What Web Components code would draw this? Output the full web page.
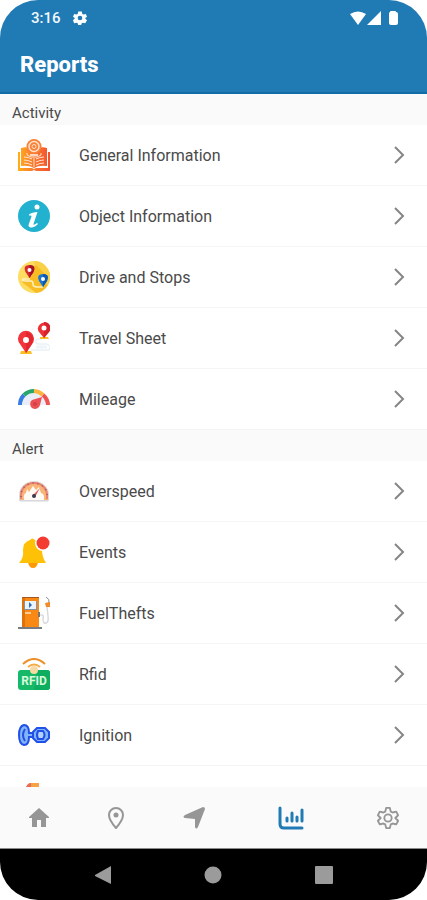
<!DOCTYPE html>
<html lang="en">
<head>
<meta charset="utf-8">
<meta name="viewport" content="width=device-width, initial-scale=1">
<title>Reports</title>
<style>
  body {
    margin: 0;
    background: #fff;
    font-family: Roboto, "Liberation Sans", sans-serif;
    color: #4a4a4a;
  }
</style>
</head>
<body>
<report-app>
  <status-bar slot="top" time="3:16"></status-bar>
  <app-header slot="top">Reports</app-header>

  <report-section heading="Activity">
    <report-row icon="general">General Information</report-row>
    <report-row icon="info">Object Information</report-row>
    <report-row icon="drive">Drive and Stops</report-row>
    <report-row icon="travel">Travel Sheet</report-row>
    <report-row icon="mileage">Mileage</report-row>
  </report-section>
  <report-section heading="Alert">
    <report-row icon="overspeed">Overspeed</report-row>
    <report-row icon="events">Events</report-row>
    <report-row icon="fuel">FuelThefts</report-row>
    <report-row icon="rfid">Rfid</report-row>
    <report-row icon="ignition">Ignition</report-row>
    <report-row icon="sensor"></report-row>
  </report-section>

  <tab-bar slot="bottom"></tab-bar>
  <system-bar slot="bottom"></system-bar>
</report-app>

<script>
const reportIcons = {
  general: `
    <defs><linearGradient id="book" gradientUnits="userSpaceOnUse" x1="0" y1="0" x2="32" y2="0">
      <stop offset="0" stop-color="#ffae1a"/><stop offset=".5" stop-color="#f97830"/><stop offset="1" stop-color="#f4512c"/>
    </linearGradient></defs>
    <path fill="url(#book)" d="M0 13h2v16h12l2 1 2-1h12V13h2v19H18l-2-1-2 1H0z"/>
    <path fill="url(#book)" d="M3 9q7-2 13 2 6-4 13-2v18q-8-1-13 2-5-3-13-2z"/>
    <g fill="none" stroke="#ffe3cc" stroke-width="1">
      <path d="M16 19v9M6 18q4 0 8 2M18 20q4-2 8-2M6 21q4 0 8 2M18 23q4-2 8-2M6 24q4 0 8 2M18 26q4-2 8-2"/>
      <path d="M9 14v2l4 2h6l4-2v-2"/>
    </g>
    <circle cx="16" cy="7.500" r="7.500" fill="#f98036"/>
    <circle cx="16" cy="7.500" r="5" fill="none" stroke="#ffe3cc" stroke-width="1.500"/>
    <circle cx="16" cy="7.500" r="2" fill="none" stroke="#ffe3cc"/>
    <path d="M12 15h8v2h-8z" fill="#fff" opacity=".7"/>`,
  info: `
    <circle cx="16" cy="16" r="16" fill="#22b1ce"/>
    <circle cx="19" cy="7" r="2.500" fill="#fff"/>
    <path d="M11 14.500q3-2.500 8.500-2.500l-4 12q-.5 2 3.500-1l1 1q-4 4-7.500 3.500-3-.5-1.500-4l2.500-7q.5-1.500-2.500-1z" fill="#fff"/>`,
  drive: `
    <circle cx="16" cy="16" r="16" fill="#fddc60"/>
    <path d="M16 0a16 16 0 0 1 14 24L17 8z" fill="#fbd049"/>
    <path d="M12 15l7 1 11 8a16 16 0 0 1-12 8L4 21z" fill="#f8bd25"/>
    <path d="M14 6l4-2 12 12-8 8-8-8z" fill="#f8bd25"/>
    <path d="M12 18H5q-2 2 3 2h5q2 0 2 3t4 3h6" fill="none" stroke="#fff2c4" stroke-width="1.500"/>
    <path d="M11.500 17l-4-6q-3-7 4-7t4 7z" fill="#d52b31"/>
    <path d="M11.500 17V4q7 0 4 7z" fill="#a31522"/>
    <circle cx="11.500" cy="9" r="2" fill="#fff"/>
    <path d="M25 26l-4-6q-3-7 4-7t4 7z" fill="#1976d2"/>
    <path d="M25 26V13q7 0 4 7z" fill="#0d58b2"/>
    <circle cx="25" cy="18" r="2" fill="#fff"/>`,
  travel: `
    <path d="M24 17h-5q-3 2 0 5h10q5 2 2 6H13" fill="none" stroke="#dfeaf2" stroke-width="1"/>
    <path d="M18 25h11" fill="none" stroke="#eef5fa" stroke-width="3"/>
    <path d="M22 15h8l1 2h-9zM3 29h10l1 3H2z" fill="#fbbf26"/>
    <path d="M26 16l-5-6a6 6 0 1 1 10 0z" fill="#ed3237"/>
    <path d="M26 16V0a6 6 0 0 1 5 10z" fill="#d5222d"/>
    <circle cx="26" cy="6" r="2.500" fill="#fff"/>
    <path d="M8 31L2 22a8 8 0 1 1 12 0z" fill="#f1353b"/>
    <path d="M8 31V10a8 8 0 0 1 6 12z" fill="#e3262f"/>
    <circle cx="8" cy="18" r="3" fill="#fff"/>`,
  mileage: `
    <path d="M3 22a13 13 0 0 1 26 0H20l-4-5-4 5z" fill="#e9eef8"/>
    <g fill="none" stroke-width="4">
      <path d="M2 22a14 14 0 0 1 4-10" stroke="#3a7be0"/>
      <path d="M6 12a14 14 0 0 1 10-4" stroke="#29a66a"/>
      <path d="M16 8a14 14 0 0 1 9 4" stroke="#fcb63f"/>
      <path d="M25 12a14 14 0 0 1 5 10" stroke="#f0524f"/>
    </g>
    <path d="M24 14l-2 8a5 5 0 1 1-8-5z" fill="#ea5054"/>
    <circle cx="17" cy="21" r="2" fill="#d63f47"/>`,
  overspeed: `
    <path d="M1 26v-6a15 14 0 0 1 30 0v6z" fill="#dcdbe1"/>
    <path d="M2 25v-5a14 13 0 0 1 28 0v5z" fill="#f9b478"/>
    <path d="M3 24v-4a13 12 0 0 1 26 0v4" fill="none" stroke="#ea8370" stroke-width="2"/>
    <path d="M3 22v-2a13 12 0 0 1 26 0v2" fill="none" stroke="#9b5668" stroke-width="1.500" stroke-dasharray="1 4"/>
    <path d="M6 25q-1-6 2-7l1-4 2 3 4-6 3 4 3-3 2 6q4 1 3 7z" fill="#fffaf4"/>
    <path d="M2 26h28" stroke="#d4d4da"/>
    <path d="M15 20l7-7-5 9z" fill="#e05a5c"/>
    <circle cx="16" cy="21" r="2" fill="#383b4b"/>`,
  events: `
    <path d="M10 26h10q-1 6-5 6t-5-6z" fill="#ff9907"/>
    <path d="M12 4q2-3 5 0 7 2 7 10 0 7 4 13H1q5-5 4-13 0-8 7-10z" fill="#ffc107"/>
    <circle cx="25" cy="7" r="8" fill="#fff"/>
    <circle cx="25" cy="7" r="6.500" fill="#f33b31"/>`,
  fuel: `
    <path d="M21 18h3q2 0 1 4 0 5 3 4 3-1 2-7l-1-9" fill="none" stroke="#d8dadd" stroke-width="1.500"/>
    <path d="M28 0q4 2 3 6" fill="none" stroke="#8a8a8a"/>
    <path d="M27 6l5-1v5h-4z" fill="#f48a25"/>
    <path d="M4 0h17v31H4z" fill="#f88914"/>
    <path d="M4 0h3v31H4z" fill="#df720b"/>
    <path d="M4 0h17v1H4z" fill="#a85721"/>
    <path d="M6 4h13v9H6z" fill="#8793a0"/>
    <path d="M7 4h11v8H7z" fill="#e9f4fd"/>
    <path d="M11 5l3 3-3 3z" fill="#2f6fb7"/>
    <path d="M7 16h6" stroke="#fce2bd" stroke-width="1.500"/>
    <path d="M20 15h2v5h-2z" fill="#777"/>
    <path d="M0 30h24v2H0z" fill="#777c82"/>`,
  rfid: `
    <path d="M5 6q11-10 22 0" fill="none" stroke="#ed912c" stroke-width="2"/>
    <path d="M10 9q6-5 12 0" fill="none" stroke="#f6aa42" stroke-width="2"/>
    <rect y="12" width="32" height="20" rx="3" fill="#16b967"/>
    <path d="M20 12h9q3 0 3 3v14q0 3-3 3H16z" fill="#0dae60"/>
    <circle cx="16" cy="12" r="4" fill="#f7d9a4"/>
    <text x="16" y="27" text-anchor="middle" font-family="Roboto, sans-serif" font-size="12" font-weight="700" fill="#d9fbdc">RFID</text>`,
  ignition: `
    <g fill="#82b4fa" stroke="#2050e8" stroke-width="2">
      <path d="M6 6q5 0 5 8h5v4h-5q0 8-5 8-5-1-5-10T6 6z"/>
      <path d="M7 10q-4 6 0 12" fill="none"/>
      <path d="M15 13l4-4h8l4 4v6l-4 4h-8l-4-4z"/>
      <path d="M20 12h5q3 4 0 8h-5q-2-4 0-8z" fill="#b4d4fd"/>
    </g>`,
  sensor: `
    <path d="M8 7q2-4 5-4h8v6H8z" fill="#f6a245"/>
    <path d="M8 7q2-4 5-4v5H8z" fill="#e86a55"/>
    <path d="M6 9h16v19H6z" fill="#f6a245"/>`
};

class ReportApp extends HTMLElement {
  constructor() {
    super();
    this.attachShadow({ mode: 'open' });
  }

  connectedCallback() {
    this.shadowRoot.innerHTML = `
      <style>
        :host {
          display: flex;
          flex-direction: column;
          height: 100vh;
          overflow: hidden;
          border-radius: 38px;
          background: #fff;
        }

        main {
          flex: 1;
          min-height: 0;
          overflow: auto;
          scrollbar-width: none;
        }
      </style>
      <slot name="top"></slot>
      <main><slot></slot></main>
      <slot name="bottom"></slot>
    `;
  }
}
customElements.define('report-app', ReportApp);

class StatusBar extends HTMLElement {
  constructor() {
    super();
    this.attachShadow({ mode: 'open' });
  }

  connectedCallback() {
    this.shadowRoot.innerHTML = `
      <style>
        :host {
          display: flex;
          align-items: center;
          height: 36px;
          padding: 0 28px 0 31px;
          background: #207bb5;
          color: #f2f8fc;
          font-size: 15px;
          font-weight: 500;
        }

        .gear {
          margin-left: 12px;
        }

        .signals {
          margin-left: auto;
        }
      </style>
      <span>${this.getAttribute('time')}</span>
      <svg class="gear" width="14" height="14" viewBox="0 0 24 24" fill="#fff" aria-hidden="true">
        <path fill-rule="evenodd" d="M9 1h6l1 4 2 1 4-1 2 5-3 2v1l3 3-3 5-4-1-2 1-1 3H9l-1-3-2-1-4 1-2-5 3-3v-1L0 10l2-5 4 1 2-1zM12 8a4 4 0 1 0 0 8 4 4 0 0 0 0-8z"/>
      </svg>
      <svg class="signals" width="50" height="16" viewBox="0 0 50 16" fill="#fff" aria-hidden="true">
        <path d="M1 4q8-5 16 0L9 15z"/>
        <path d="M32 1v14H18z"/>
        <path d="M41 2q0-1 1-1h4q1 0 1 1 2 0 2 2v9q0 2-2 2h-5q-2 0-2-2V4q0-2 1-2z"/>
      </svg>
    `;
  }
}
customElements.define('status-bar', StatusBar);

class AppHeader extends HTMLElement {
  constructor() {
    super();
    this.attachShadow({ mode: 'open' });
  }

  connectedCallback() {
    this.shadowRoot.innerHTML = `
      <style>
        :host {
          display: block;
          padding: 17px 20px 15px;
          background: #207bb5;
          border-bottom: 2px solid #126ca6;
          color: #fff;
        }

        h1 {
          margin: 0;
          font-size: 22px;
          line-height: 24px;
          font-weight: 800;
        }
      </style>
      <h1><slot></slot></h1>
    `;
  }
}
customElements.define('app-header', AppHeader);

class ReportSection extends HTMLElement {
  constructor() {
    super();
    this.attachShadow({ mode: 'open' });
  }

  connectedCallback() {
    this.shadowRoot.innerHTML = `
      <style>
        :host {
          display: block;
        }

        h2 {
          margin: 0;
          padding: 11px 12px 4px;
          background: #fafafa;
          font-size: 15px;
          line-height: 16px;
          font-weight: 400;
        }
      </style>
      <h2>${this.getAttribute('heading')}</h2>
      <slot></slot>
    `;
  }
}
customElements.define('report-section', ReportSection);

class ReportRow extends HTMLElement {
  constructor() {
    super();
    this.attachShadow({ mode: 'open' });
  }

  connectedCallback() {
    this.shadowRoot.innerHTML = `
      <style>
        :host {
          display: block;
          border-bottom: 1px solid #f5f5f5;
        }

        button {
          display: flex;
          align-items: center;
          width: 100%;
          padding: 14px 20px 14px 18px;
          border: none;
          background: #fff;
          font: inherit;
          font-size: 16px;
          color: inherit;
          text-align: left;
          cursor: pointer;
        }

        .icon {
          flex: none;
          margin-right: 29px;
        }

        .label {
          flex: 1;
        }
      </style>
      <button type="button">
        <svg class="icon" width="32" height="32" viewBox="0 0 32 32" aria-hidden="true">${reportIcons[this.getAttribute('icon')]}</svg>
        <span class="label"><slot></slot></span>
        <svg width="16" height="20" viewBox="0 0 16 20" fill="none" stroke="#858585" stroke-width="2" aria-hidden="true">
          <path d="M4 2l8 8-8 8"/>
        </svg>
      </button>
    `;
  }
}
customElements.define('report-row', ReportRow);

class TabBar extends HTMLElement {
  constructor() {
    super();
    this.attachShadow({ mode: 'open' });
  }

  connectedCallback() {
    this.shadowRoot.innerHTML = `
      <style>
        :host {
          display: block;
          background: #fafafa;
          border-bottom: 1px solid #8a8a8a;
        }

        nav {
          display: flex;
        }

        button {
          flex: 1 1 0;
          display: grid;
          place-items: center;
          height: 61px;
          padding: 0;
          border: none;
          background: none;
          color: #969696;
          cursor: pointer;
        }

        .active {
          flex-grow: 1.5;
          color: #207bb5;
        }
      </style>
      <nav>
        <button type="button" aria-label="Home">
          <svg width="20" height="20" viewBox="0 0 20 20" fill="currentColor"><path d="M10 0l10 9v1h-3v9h-5v-7H8v7H3v-9H0V9z"/></svg>
        </button>
        <button type="button" aria-label="Map">
          <svg width="18" height="22" viewBox="0 0 18 22"><path d="M9 21Q2 13 2 8a7 7 0 0 1 14 0q0 5-7 13z" fill="none" stroke="currentColor" stroke-width="2"/><circle cx="9" cy="8" r="2.500" fill="currentColor"/></svg>
        </button>
        <button type="button" aria-label="Track">
          <svg width="22" height="22" viewBox="0 0 22 22" fill="currentColor"><path d="M20 0q2 0 2 2l-7 18q-2 3-3 0v-8l-10-1q-3-1 0-3z"/></svg>
        </button>
        <button type="button" class="active" aria-label="Reports" aria-current="page">
          <svg width="26" height="24" viewBox="0 0 26 24" fill="none" stroke="currentColor" stroke-width="3" stroke-linecap="round"><path d="M2 2v16q0 4 4 4h18"/><path d="M9 12v3M14 7v8M19 11v4M24 4v11"/></svg>
        </button>
        <button type="button" aria-label="Settings">
          <svg width="22" height="22" viewBox="0 0 24 24" fill="none" stroke="currentColor" stroke-width="2" stroke-linejoin="round"><path d="M10 1h4l1 4 2 1 4-1 2 4-3 3 3 3-2 4-4-1-2 1-1 4h-4l-1-4-2-1-4 1-2-4 3-3-3-3 2-4 4 1 2-1z"/><circle cx="12" cy="12" r="4"/></svg>
        </button>
      </nav>
    `;
  }
}
customElements.define('tab-bar', TabBar);

class SystemBar extends HTMLElement {
  constructor() {
    super();
    this.attachShadow({ mode: 'open' });
  }

  connectedCallback() {
    this.shadowRoot.innerHTML = `
      <style>
        :host {
          display: flex;
          padding: 0 48px;
          background: #000;
        }

        button {
          flex: 1;
          display: grid;
          place-items: center;
          height: 51px;
          padding: 0;
          border: none;
          background: none;
          cursor: pointer;
        }

        svg {
          fill: #9b9b9b;
        }
      </style>
      <button type="button" aria-label="Back"><svg width="18" height="18" viewBox="0 0 18 18"><path d="M17 0v18L1 10V9z"/></svg></button>
      <button type="button" aria-label="Home screen"><svg width="18" height="18" viewBox="0 0 18 18"><circle cx="9" cy="9" r="8.500"/></svg></button>
      <button type="button" aria-label="Recent apps"><svg width="18" height="18" viewBox="0 0 18 18"><rect width="18" height="18" rx="1"/></svg></button>
    `;
  }
}
customElements.define('system-bar', SystemBar);
</script>
</body>
</html>
